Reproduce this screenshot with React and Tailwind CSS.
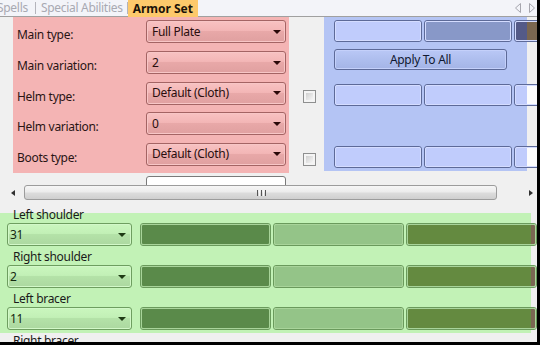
import React from "react";

const T = "text-[12px] tracking-[-0.3px] leading-none";

function Tri({ cls }) {
  return (
    <div
      className={
        "w-0 h-0 border-l-[4px] border-r-[4px] border-t-[4px] border-l-transparent border-r-transparent " +
        cls
      }
    />
  );
}

function PinkCombo({ value }) {
  return (
    <div className="h-[23px] w-[140px] shrink-0 rounded-[3px] border border-[#a46464] bg-[linear-gradient(to_bottom,#f8c2c2,#f3b6b6_45%,#e8a8a8_50%,#e0a0a0)] shadow-[inset_0_0_0_1px_#f8c6c6] flex items-center justify-between pl-[5px] pr-[4px]">
      <span className={T + " text-[#2a0e0e]"}>{value}</span>
      <Tri cls="border-t-[#2a0808]" />
    </div>
  );
}

function GreenCombo({ value }) {
  return (
    <div className="h-[23px] w-[125px] shrink-0 rounded-[3px] border border-[#6e9e60] bg-[linear-gradient(to_bottom,#caf6be,#c2f0b6_45%,#b4e2a8_50%,#acd8a0)] shadow-[inset_0_0_0_1px_#d2f8c8] flex items-center justify-between pl-[2px] pr-[5px]">
      <span className={T + " text-[#142810]"}>{value}</span>
      <Tri cls="border-t-[#1e3a14]" />
    </div>
  );
}

function CheckBox() {
  return (
    <div className="w-[13px] h-[13px] border border-[#8e8f8f] bg-[#f4f4f4] p-[2px]">
      <div className="w-full h-full bg-[linear-gradient(135deg,#cfcfcf,#f6f6f6)]" />
    </div>
  );
}

function BlueBtn({ fill }) {
  return (
    <div className="h-[22px] w-[88px] shrink-0 rounded-[3px] border border-[#5d6a98]">
      <div className={"h-full w-full rounded-[2px] border border-[#d4dcff] " + fill} />
    </div>
  );
}

function Bar({ fill }) {
  return (
    <div className="h-[23px] w-[131px] shrink-0 rounded-[3px] border border-[#6a9a5c]">
      <div className={"h-full w-full rounded-[2px] border border-[#a8d49a] " + fill} />
    </div>
  );
}

function GreenGroup({ label, value, first }) {
  return (
    <div className={first ? "-mt-[7px]" : "mt-[2px]"}>
      <div className={"h-[17px] pl-[13px] flex items-center text-[#1a1a1a] " + T}>{label}</div>
      <div className="flex items-center pl-[7px]">
        <GreenCombo value={value} />
        <div className="flex gap-[2px] ml-[8px]">
          <Bar fill="bg-[#5a8a4a]" />
          <Bar fill="bg-[#94c488]" />
          <Bar fill="bg-[linear-gradient(to_right,#648a40_123px,#7a6652_123px)]" />
        </div>
      </div>
    </div>
  );
}

export default function App() {
  return (
    <div className="w-[540px] h-[345px] bg-black overflow-hidden [font-family:'Noto_Sans','Open_Sans',sans-serif]">
      <div className="w-[537px] h-[342px] bg-[#f0f0f0] overflow-hidden flex flex-col">
        {/* tab strip */}
        <div className="h-[17px] shrink-0 bg-[#f3f4f9] border-b border-[#a0a0a0] flex items-stretch">
          <div className={"flex items-center -ml-[3px] pr-[7px] text-[#a8a9b2] " + T}>Spells</div>
          <div className="w-px my-[2px] bg-[#b4b4bc]" />
          <div className={"flex items-center pl-[5px] pr-[4px] text-[#a8a9b2] " + T}>Special Abilities</div>
          <div className="w-px my-[2px] bg-[#b4b4bc]" />
          <div className="flex items-center bg-[#fdc96b] px-[5px] -mb-px text-[12px] leading-none font-bold text-[#1a1208]">
            Armor Set
          </div>
          <div className="flex-1" />
          <div className="flex items-center gap-[8px] pr-[2px]">
            <svg width="6" height="10" viewBox="0 0 6 10">
              <path d="M5.5 0.5 L0.5 5 L5.5 9.5 Z" fill="none" stroke="#a6a6ae" strokeWidth="1" />
            </svg>
            <svg width="6" height="10" viewBox="0 0 6 10">
              <path d="M0.5 0.5 L5.5 5 L0.5 9.5 Z" fill="none" stroke="#a6a6ae" strokeWidth="1" />
            </svg>
          </div>
        </div>

        {/* upper section */}
        <div className="h-[168px] shrink-0 overflow-hidden flex pl-[13px]">
          {/* pink column */}
          <div className="w-[276px] shrink-0 flex flex-col">
            <div className="h-[156px] bg-[#f4b4b4] flex flex-col pt-[3px]">
              {[
                ["Main type:", "Full Plate", "h-[32px]"],
                ["Main variation:", "2", "h-[31px]"],
                ["Helm type:", "Default (Cloth)", "h-[31px]"],
                ["Helm variation:", "0", "h-[31px]"],
                ["Boots type:", "Default (Cloth)", "h-[31px]"],
              ].map(([l, v, h]) => (
                <div key={l} className={"flex items-start " + h}>
                  <div className={"w-[133px] pl-[4px] pt-[9px] text-[#2a1414] " + T}>{l}</div>
                  <PinkCombo value={v} />
                </div>
              ))}
            </div>
            <div className="mt-[3px] pl-[133px]">
              <div className={"h-[23px] w-[140px] rounded-[3px] border border-[#7a7a7a] bg-white flex items-start pl-[5px] pt-[1px] text-[#222] " + T}>
                .
              </div>
            </div>
          </div>
          {/* checkbox column */}
          <div className="w-[35px] shrink-0 flex flex-col pl-[14px]">
            <div className="mt-[73px]">
              <CheckBox />
            </div>
            <div className="mt-[50px]">
              <CheckBox />
            </div>
          </div>
          {/* blue column */}
          <div className="w-[203px] h-[154px] shrink-0 bg-[#b4c4f4] flex flex-col pl-[10px] pt-[3px]">
            <div className="flex gap-[2px]">
              <BlueBtn fill="bg-[#c0ccfc]" />
              <BlueBtn fill="bg-[#8898c8] border-[#a4b2e0]" />
              <BlueBtn fill="bg-[linear-gradient(to_right,#545a88_11px,#7a6650_11px)] border-[#6a6a90]" />
            </div>
            <div className={"mt-[7px] h-[21px] w-[173px] rounded-[3px] border border-[#5d6a98] bg-[linear-gradient(to_bottom,#bac8f6,#aebeee_50%,#a4b4e6)] shadow-[inset_0_0_0_1px_#c4d0fa] flex items-center justify-center text-[#101830] " + T}>
              Apply To All
            </div>
            <div className="flex gap-[2px] mt-[14px]">
              <BlueBtn fill="bg-[#c0ccfc]" />
              <BlueBtn fill="bg-[#c0ccfc]" />
              <BlueBtn fill="bg-[linear-gradient(to_right,#c0ccfc_11px,#fcfcfc_11px)]" />
            </div>
            <div className="flex gap-[2px] mt-[40px]">
              <BlueBtn fill="bg-[#c0ccfc]" />
              <BlueBtn fill="bg-[#c0ccfc]" />
              <BlueBtn fill="bg-[linear-gradient(to_right,#c0ccfc_11px,#fcfcfc_11px)]" />
            </div>
          </div>
        </div>

        {/* horizontal scrollbar */}
        <div className="h-[15px] shrink-0 flex items-center">
          <div className="w-[24px] flex justify-start pl-[11px]">
            <div className="w-0 h-0 border-t-[3px] border-b-[3px] border-r-[4px] border-t-transparent border-b-transparent border-r-[#303030]" />
          </div>
          <div className="w-[473px] h-[15px] rounded-[3px] border border-[#9c9c9c] bg-[linear-gradient(to_bottom,#f6f6f6,#ececec_45%,#dcdcdc_55%,#cfcfcf)] flex items-center pl-[232px] gap-[1px]">
            <div className="w-px h-[6px] bg-[#555]" />
            <div className="w-px h-[6px] bg-[#f8f8f8]" />
            <div className="w-px h-[6px] bg-[#555]" />
            <div className="w-px h-[6px] bg-[#f8f8f8]" />
            <div className="w-px h-[6px] bg-[#555]" />
          </div>
          <div className="flex-1 flex justify-end pr-[4px]">
            <div className="w-0 h-0 border-t-[3px] border-b-[3px] border-l-[4px] border-t-transparent border-b-transparent border-l-[#303030]" />
          </div>
        </div>

        {/* green list */}
        <div className="mt-[13px] h-[120px] w-[531px] shrink-0 bg-[#c2f2b6]">
          <GreenGroup label="Left shoulder" value="31" first />
          <GreenGroup label="Right shoulder" value="2" />
          <GreenGroup label="Left bracer" value="11" />
          <div className={"mt-[2px] h-[17px] pl-[13px] flex items-center text-[#1a1a1a] " + T}>Right bracer</div>
        </div>
      </div>
    </div>
  );
}
